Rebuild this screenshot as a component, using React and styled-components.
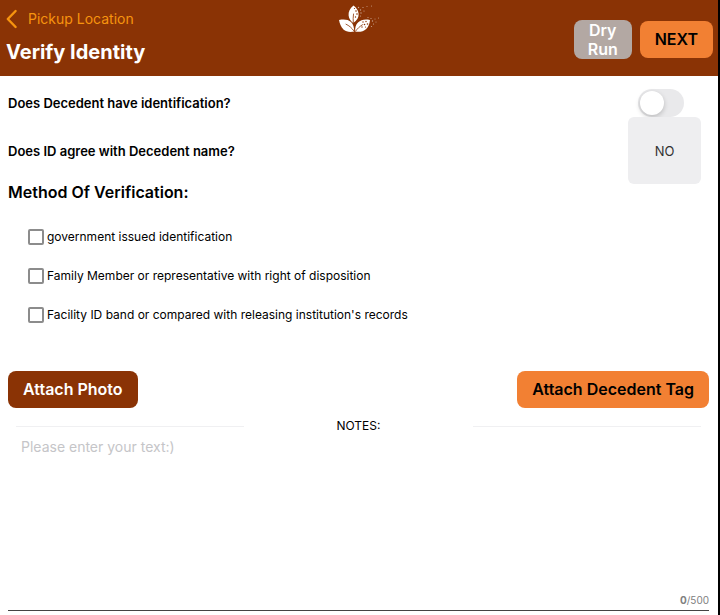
import React, { useState } from 'react';
import styled, { createGlobalStyle } from 'styled-components';

const METHODS = [
  'government issued identification',
  'Family Member or representative with right of disposition',
  "Facility ID band or compared with releasing institution's records",
];

const MAX_NOTES = 500;

export default function App() {
  const [hasId, setHasId] = useState(false);
  const [nameAgrees, setNameAgrees] = useState(false);
  const [notes, setNotes] = useState('');

  return (
    <>
      <GlobalStyle />
      <Screen>
        <Header>
          <HeaderLeft>
            <BackLink href="#pickup-location">
              <svg width="12" height="20" viewBox="0 0 12 20" fill="none" stroke="currentColor" strokeWidth="2.4" strokeLinecap="round" strokeLinejoin="round" aria-hidden="true">
                <path d="M9.600 2L1.800 10l7.800 8" />
              </svg>
              Pickup Location
            </BackLink>
            <Title>Verify Identity</Title>
          </HeaderLeft>
          <Logo />
          <HeaderActions>
            <DryRunButton type="button">Dry Run</DryRunButton>
            <Button type="button">NEXT</Button>
          </HeaderActions>
        </Header>

        <Main>
          <Question>
            <QuestionLabel htmlFor="has-id">Does Decedent have identification?</QuestionLabel>
            <Answer $inset>
              <Toggle
                id="has-id"
                type="checkbox"
                role="switch"
                checked={hasId}
                onChange={(e) => setHasId(e.target.checked)}
              />
            </Answer>
          </Question>
          <Question>
            <QuestionLabel htmlFor="name-agrees">Does ID agree with Decedent name?</QuestionLabel>
            <Answer>
              <AnswerButton id="name-agrees" type="button" onClick={() => setNameAgrees(!nameAgrees)}>
                {nameAgrees ? 'YES' : 'NO'}
              </AnswerButton>
            </Answer>
          </Question>

          <Subtitle>Method Of Verification:</Subtitle>
          <Methods>
            {METHODS.map((method) => (
              <Method key={method}>
                <Checkbox type="checkbox" />
                {method}
              </Method>
            ))}
          </Methods>

          <Attachments>
            <Button type="button" $dark>Attach Photo</Button>
            <Button type="button">Attach Decedent Tag</Button>
          </Attachments>

          <NotesHeader>
            <Line />
            <label htmlFor="notes">NOTES:</label>
            <Line />
          </NotesHeader>
          <Notes>
            <NotesInput
              id="notes"
              placeholder="Please enter your text:)"
              maxLength={MAX_NOTES}
              value={notes}
              onChange={(e) => setNotes(e.target.value)}
            />
            <Counter>
              <b>{notes.length}</b>
              /
              {MAX_NOTES}
            </Counter>
          </Notes>
        </Main>
      </Screen>
    </>
  );
}

function Logo() {
  return (
    <svg width="42" height="30" viewBox="0 0 42 30" fill="#fff" role="img" aria-label="Leaf logo">
      <path d="M14.500 1.500C10.800 4.500 9.300 7.900 9.600 11.500c.3 3.300 2.200 5.800 4.600 7.600C18 16.500 20 13.300 19.600 9.700 19.300 6.500 17.400 3.600 14.500 1.500z" />
      <path d="M0 15.900c5.200-1 9.300-.4 12 2 2.200 2.200 3.200 5.200 3.200 9.700-4.400.8-8.200.3-10.900-2.300C2.200 23.100.7 19.500 0 15.900z" />
      <path d="M31 15.900c-4.800-1.100-9.100-.3-12 2.500-2.300 2.300-3.100 5.200-2.800 9.200 4.600.6 8.300-.1 11-2.600 2.200-2.100 3.500-5.500 3.800-9.100z" />
      <g fill="none" stroke="#8a3305" strokeWidth=".8" strokeLinecap="round">
        <path d="M14.300 19c-.2-3.300-.2-6 .2-9" />
        <path d="M15 27c-2.300-3.200-4.700-5.300-8-6.800" />
        <path d="M16.700 27c1.800-2.500 3.800-4.400 6.800-6.300" />
      </g>
      <g fill="#8a3305">
        <circle cx="17" cy="7" r=".8" />
        <circle cx="18" cy="10" r=".8" />
        <circle cx="16.500" cy="13" r=".7" />
        <circle cx="15.500" cy="4.500" r=".6" />
        <circle cx="24" cy="18" r=".7" />
        <circle cx="27" cy="17.500" r=".7" />
        <circle cx="25.500" cy="20.500" r=".8" />
        <circle cx="28.500" cy="20" r=".8" />
        <circle cx="23" cy="23" r=".7" />
        <circle cx="26.500" cy="23" r=".6" />
      </g>
      <g opacity=".55">
        <circle cx="19.500" cy="3.500" r=".7" />
        <circle cx="21.500" cy="6" r=".7" />
        <circle cx="22" cy="9" r=".7" />
        <circle cx="21.500" cy="12" r=".6" />
        <circle cx="24" cy="3.500" r=".6" />
        <circle cx="25" cy="7" r=".6" />
        <circle cx="28" cy="2.500" r=".5" />
        <circle cx="32.500" cy="2" r=".5" />
        <circle cx="29" cy="13.500" r=".6" />
        <circle cx="32" cy="14.500" r=".6" />
        <circle cx="33.500" cy="17" r=".7" />
        <circle cx="34.500" cy="20" r=".6" />
        <circle cx="32.500" cy="22.500" r=".6" />
        <circle cx="36" cy="15" r=".5" />
        <circle cx="39.500" cy="14" r=".5" />
        <circle cx="37" cy="18" r=".5" />
      </g>
    </svg>
  );
}

const GlobalStyle = createGlobalStyle`
  * {
    box-sizing: border-box;
  }
  body {
    margin: 0;
    background: #fff;
    color: #000;
    font-family: Inter, "Liberation Sans", sans-serif;
    font-size: 13px;
  }
  button, input, textarea {
    margin: 0;
    font-family: inherit;
  }
`;

const Screen = styled.div`
  min-height: 100vh;
  display: flex;
  flex-direction: column;
  border-right: 2px solid #000;
`;

const Header = styled.header`
  display: grid;
  grid-template-columns: 1fr auto 1fr;
  align-items: start;
  padding: 4px 5px 9px 6px;
  background: #8a3305;
`;

const HeaderLeft = styled.div`
  display: flex;
  flex-direction: column;
  gap: 8px;
  padding-top: 5px;
`;

const BackLink = styled.a`
  display: flex;
  align-items: center;
  gap: 10px;
  color: #f7940f;
  font-size: 14px;
  line-height: 20px;
  text-decoration: none;
`;

const Title = styled.h1`
  margin: 0;
  color: #fff;
  font-size: 20px;
  line-height: 30px;
  font-weight: 700;
`;

const HeaderActions = styled.div`
  display: flex;
  justify-content: flex-end;
  align-items: center;
  gap: 8px;
  padding-top: 16px;
`;

const Button = styled.button`
  height: 37px;
  padding: 0 15px;
  border: 0;
  border-radius: 8px;
  background: ${(props) => (props.$dark ? '#8a3305' : '#f28033')};
  color: ${(props) => (props.$dark ? '#fff' : '#000')};
  font-size: 16px;
  line-height: 19px;
  font-weight: 600;
`;

const DryRunButton = styled(Button)`
  width: 58px;
  height: 39px;
  padding: 0 12px;
  background: #b3a8a3;
  color: #fff;
`;

const Main = styled.main`
  flex: 1;
  display: flex;
  flex-direction: column;
  padding: 13px 9px 4px 8px;
`;

const Question = styled.div`
  display: flex;
  align-items: center;
  justify-content: space-between;
`;

const QuestionLabel = styled.label`
  font-size: 13px;
  font-weight: 600;
`;

const Answer = styled.div`
  display: flex;
  padding-right: ${(props) => (props.$inset ? '25px' : '8px')};
`;

const Toggle = styled.input`
  appearance: none;
  display: flex;
  width: 46px;
  height: 28px;
  padding: 2px;
  border-radius: 14px;
  background: #e9e9eb;

  &::before {
    content: '';
    width: 24px;
    height: 24px;
    border-radius: 50%;
    background: #fff;
    box-shadow: 0 2px 5px rgba(0, 0, 0, 0.2);
  }
  &:checked {
    justify-content: flex-end;
    background: #f28033;
  }
`;

const AnswerButton = styled.button`
  width: 73px;
  height: 67px;
  border: 0;
  border-radius: 6px;
  background: #eeeef0;
  color: #333;
  font-size: 13px;
`;

const Subtitle = styled.h2`
  margin: 0;
  font-size: 16px;
  line-height: 16px;
  font-weight: 600;
`;

const Methods = styled.div`
  display: flex;
  flex-direction: column;
  gap: 23px;
  padding: 29px 20px 48px;
`;

const Method = styled.label`
  display: flex;
  align-items: center;
  gap: 3px;
  font-size: 12px;
  line-height: 16px;
`;

const Checkbox = styled.input`
  appearance: none;
  width: 16px;
  height: 16px;
  border: 2px solid #8c8c8c;
  border-radius: 2px;
  background: #fff;

  &:checked {
    background: #f28033;
  }
`;

const Attachments = styled.div`
  display: flex;
  justify-content: space-between;
`;

const NotesHeader = styled.div`
  display: grid;
  grid-template-columns: repeat(3, 1fr);
  align-items: center;
  margin-top: 10px;
  padding: 0 8px;
  font-size: 12px;
  line-height: 16px;
  text-align: center;
`;

const Line = styled.hr`
  width: 100%;
  margin: 0;
  border: 0;
  border-top: 1px solid #f0f0f2;
`;

const Notes = styled.div`
  flex: 1;
  display: flex;
  flex-direction: column;
  border-bottom: 1px solid #444;
`;

const NotesInput = styled.textarea`
  flex: 1;
  padding: 3px 13px;
  border: 0;
  outline: none;
  resize: none;
  background: transparent;
  font-size: 14px;
  line-height: 20px;

  &::placeholder {
    color: #c5c5c8;
  }
`;

const Counter = styled.div`
  padding-bottom: 3px;
  color: #808080;
  font-size: 10px;
  line-height: 14px;
  text-align: right;
`;
